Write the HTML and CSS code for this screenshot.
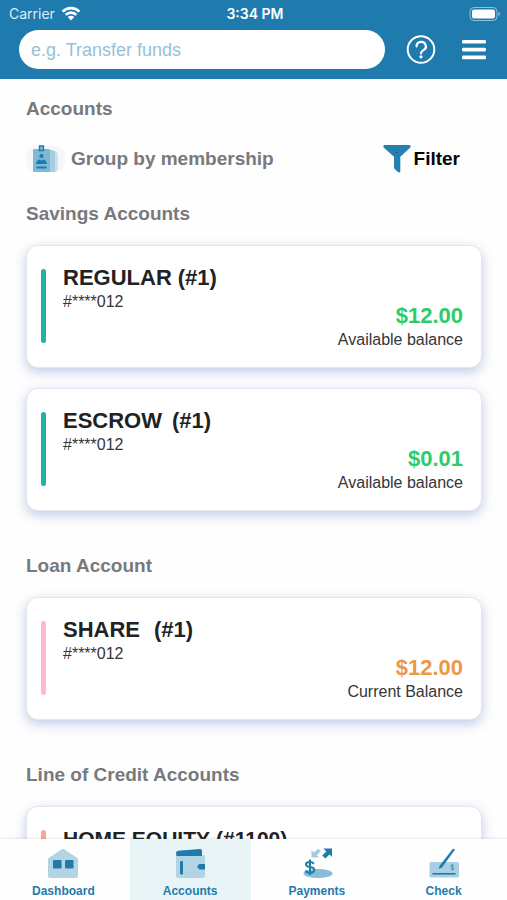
FILE: index.html
```html
<!DOCTYPE html>
<html lang="en">
<head>
<meta charset="utf-8">
<meta name="viewport" content="width=device-width, initial-scale=1">
<title>Accounts</title>
<link rel="stylesheet" href="styles.css">
</head>
<body>
<header class="top">
  <div class="status">
    <div class="carrier">Carrier
      <svg width="20" height="15" viewBox="0 0 20 15" fill="none" stroke="#fff" stroke-width="2.6">
        <path d="M1.6 5.6a12 12 0 0 1 16.800 0M4.700 8.800a7.500 7.500 0 0 1 10.600 0"/>
        <path d="M10 14.400l-3.200-3.300a4.600 4.600 0 0 1 6.400 0z" fill="#fff" stroke="none"/>
      </svg>
    </div>
    <div class="clock">3:34 PM</div>
    <svg class="battery" width="32" height="14" viewBox="0 0 32 14">
      <rect x="1" y="0.5" width="27" height="13" rx="4" fill="none" stroke="#8fc0dc"/>
      <rect x="3" y="2.500" width="23" height="9" rx="2" fill="#fff"/>
      <path d="M29.500 5v4q1.500-.6 1.500-2t-1.500-2z" fill="#8fc0dc"/>
    </svg>
  </div>
  <div class="tools">
    <input class="search" type="text" aria-label="Search" placeholder="e.g. Transfer funds">
    <button class="icon-btn" aria-label="Help">
      <svg width="30" height="30" viewBox="0 0 30 30" fill="none" stroke="#fff" stroke-linecap="round">
        <circle cx="15" cy="14.500" r="13.300" stroke-width="2"/>
        <path d="M10.600 11.300a4.600 4.400 0 1 1 6.800 3.800Q15 16.500 15 18.500" stroke-width="2.200"/>
        <circle cx="15" cy="21.800" r="1.600" fill="#fff" stroke="none"/>
      </svg>
    </button>
    <button class="icon-btn" aria-label="Menu">
      <svg width="24" height="20" viewBox="0 0 24 20" fill="#fff">
        <rect y="0" width="24" height="3.600" rx="1.300"/><rect y="7.800" width="24" height="3.600" rx="1.300"/><rect y="15.600" width="24" height="3.600" rx="1.300"/>
      </svg>
    </button>
  </div>
</header>

<main class="content">
  <h1 class="heading">Accounts</h1>
  <div class="actions">
    <button class="action group">
      <svg width="39" height="28" viewBox="0 0 39 28">
        <rect x="0" y="1" width="39" height="26" rx="9" fill="#f5f7f9"/>
        <path d="M22 6h8l2 3v16l-3 2h-7z" fill="#cfe2ec"/>
        <path d="M20 5h7l2 2v20h-9z" fill="#a6cde0"/>
        <rect x="7" y="4" width="17" height="23" rx="1" fill="#7db8d6"/>
        <path d="M13.500 1h4v4.500h-4z" fill="#7db8d6" stroke="#1f7bac" stroke-width="1.400"/>
        <circle cx="15.500" cy="11" r="2.100" fill="#1f7bac"/>
        <path d="M10 19q.5-4 3.500-4.500l2 1 2-1q3 .5 3.500 4.500z" fill="#1f7bac"/>
        <path d="M10.500 22.500h10" stroke="#1f7bac" stroke-width="2"/>
      </svg>
      Group by membership
    </button>
    <button class="action filter">
      <svg width="28" height="28" viewBox="0 0 28 28" fill="#2380b1">
        <path d="M1.200 0h25.600q1.500 1.300.3 2.700L17.300 11.800V26.500q-.6 1.400-2 .7L11.600 24q-.6-.6-.6-1.500V11.800L.9 2.700Q-.5 1.300 1.200 0z"/>
        <path d="M11.500 7.500h4" stroke="#1a6b97" stroke-width="1"/>
      </svg>
      Filter
    </button>
  </div>

  <section>
    <h2 class="heading">Savings Accounts</h2>
    <article class="card">
      <span class="bar teal"></span>
      <div class="info">
        <h3 class="name">REGULAR <span>(#1)</span></h3>
        <p class="small">#****012</p>
      </div>
      <div class="balance">
        <p class="amount green">$12.00</p>
        <p class="small">Available balance</p>
      </div>
    </article>
    <article class="card">
      <span class="bar teal"></span>
      <div class="info">
        <h3 class="name wide">ESCROW <span>(#1)</span></h3>
        <p class="small">#****012</p>
      </div>
      <div class="balance">
        <p class="amount green">$0.01</p>
        <p class="small">Available balance</p>
      </div>
    </article>
  </section>

  <section>
    <h2 class="heading">Loan Account</h2>
    <article class="card">
      <span class="bar pink"></span>
      <div class="info">
        <h3 class="name wider">SHARE <span>(#1)</span></h3>
        <p class="small">#****012</p>
      </div>
      <div class="balance">
        <p class="amount orange">$12.00</p>
        <p class="small">Current Balance</p>
      </div>
    </article>
  </section>

  <section>
    <h2 class="heading">Line of Credit Accounts</h2>
    <article class="card">
      <span class="bar coral"></span>
      <div class="info">
        <h3 class="name long">HOME EQUITY <span>(#1100)</span></h3>
      </div>
    </article>
  </section>
</main>

<nav class="tabs">
  <a class="tab" href="#dashboard">
    <svg width="32" height="32" viewBox="0 0 32 32">
      <path d="M1 12.500q0-1.200 1-1.800L14.500 2.500q1.500-.9 3 0L30 10.700q1 .6 1 1.800V29q0 2-2 2H3q-2 0-2-2z" fill="#b3d4e5"/>
      <rect x="6" y="13" width="8.500" height="8.500" rx="1.200" fill="#1f7bac"/>
      <rect x="18" y="13" width="8.500" height="8.500" rx="1.200" fill="#1f7bac"/>
    </svg>
    Dashboard
  </a>
  <a class="tab active" href="#accounts">
    <svg width="32" height="32" viewBox="0 0 32 32">
      <path d="M2 8h27q2 0 2 2v19q0 2-2 2H4q-2 0-2-2z" fill="#b3d4e5"/>
      <path d="M2 6q0-2 2-2.200L26 2q2 0 2 2v5H2.500z" fill="#1f7bac"/>
      <rect x="6" y="14" width="3" height="13.500" rx="1" fill="#1f7bac"/>
      <path d="M31 17h-4.500q-3 .3-3 2.700t3 2.700H31z" fill="#1f7bac"/>
    </svg>
    Accounts
  </a>
  <a class="tab" href="#payments">
    <svg width="32" height="32" viewBox="0 0 32 32">
      <ellipse cx="17" cy="26.500" rx="14.500" ry="4.500" fill="#8bbdd6"/>
      <path d="M12.800 16.800Q11.500 15 8.700 15q-3.700 0-3.700 2.500 0 2 4 2.600 4.300.6 4.300 3 0 2.700-4.300 2.700-3.500 0-4.500-2.300M9 12.500v15.500" fill="none" stroke="#1f7bac" stroke-width="2"/>
      <path d="M10.500 3v7.500H18l-2.300-2.300 4-4-2.500-2.400-4.200 3.700z" fill="#a4cadd"/>
      <path d="M31 1.500V10l-2.500-2.500-4.200 4-3.100-3 4.100-4-2.800-3z" fill="#1f7bac"/>
    </svg>
    Payments
  </a>
  <a class="tab" href="#check">
    <svg width="32" height="32" viewBox="0 0 32 32">
      <rect x="1.500" y="15" width="29.500" height="15.500" rx="1.500" fill="#a9cfe2"/>
      <path d="M4.500 26.800h23" stroke="#1f7bac" stroke-width="1.600"/>
      <path d="M25.800 18.500q-3-1-3 .6 0 .9 1.500 1.200 1.700.3 1.600 1.300-.2 1.400-3.200.5M24.300 17v6.500" fill="none" stroke="#4b96bd" stroke-width="1"/>
      <path d="M24.500 2.200q1.500-1.200 2.400.6L14 20.500l-3.300 1.500.9-3.300z" fill="#1f7bac"/>
    </svg>
    Check
  </a>
</nav>
</body>
</html>
```

FILE: styles.css
```css
* { box-sizing: border-box; }

body {
  margin: 0;
  height: 100vh;
  display: flex;
  flex-direction: column;
  background: #fefefe;
  color: #212224;
  font-family: "Liberation Sans", Arial, sans-serif;
}

h1, h2, h3, p { margin: 0; }

button {
  border: 0;
  padding: 0;
  background: none;
  font: inherit;
}

svg { display: block; flex: none; }

.top {
  flex: none;
  background: #1f7bae;
  padding-bottom: 10px;
}

.status {
  display: grid;
  grid-template-columns: 1fr auto 1fr;
  align-items: center;
  height: 30px;
  padding: 0 6px 3px 9px;
  color: #fff;
  font-family: Inter, sans-serif;
  font-size: 14px;
}

.carrier {
  display: flex;
  align-items: center;
  gap: 6px;
  color: #dcedf6;
}

.clock { font-weight: 600; }

.battery { justify-self: end; }

.tools {
  display: flex;
  align-items: center;
  padding: 0 21px 0 19px;
}

.search {
  flex: 1;
  min-width: 0;
  height: 39px;
  margin-right: 21px;
  padding: 2px 12px 0;
  border: 0;
  border-radius: 20px;
  background: #fff;
  font: 18px "Liberation Sans", Arial, sans-serif;
}

.search::placeholder { color: #98c0d8; opacity: 1; }

.icon-btn + .icon-btn { margin-left: 26px; }

.content {
  flex: 1;
  min-height: 0;
  overflow: hidden;
  padding: 18px 25px 0 26px;
}

.heading, .action {
  font-size: 19px;
  line-height: 24px;
  font-weight: 700;
  color: #77797c;
}

.actions {
  display: flex;
  justify-content: space-between;
  height: 24px;
  margin: 26px 0 31px;
  padding-right: 22px;
}

.action { display: flex; align-items: center; }
.group { gap: 6px; }
.filter { gap: 3px; color: #050505; }

section { margin-bottom: 43px; }

.card {
  display: flex;
  margin-top: 20px;
  padding: 19px 18px 16px 14px;
  border: 1px solid #e2e6ee;
  border-radius: 12px;
  background: #fff;
  box-shadow: 0 4px 12px rgba(90, 115, 190, 0.36);
}

.heading + .card { margin-top: 19px; }

.bar {
  flex: none;
  width: 5px;
  min-height: 74px;
  margin: 4px 17px 8px 0;
  border-radius: 3px;
}

.teal { background: #20b2a6; }
.pink { background: #ffb9ca; }
.coral { background: #f9a68e; }

.info { flex: 1; }

.name {
  display: flex;
  gap: 6px;
  font-size: 22px;
  line-height: 26px;
}

.wide { gap: 10px; }
.wider { gap: 14px; }
.long { font-size: 21px; }

.small {
  font-size: 16px;
  line-height: 22px;
  color: #353638;
}

.balance { align-self: flex-end; text-align: right; }

.amount {
  font-size: 22px;
  line-height: 26px;
  font-weight: 700;
}

.green { color: #2ecc68; }
.orange { color: #ea984a; }

.tabs {
  position: relative;
  flex: none;
  display: grid;
  grid-template-columns: repeat(4, 1fr);
  height: 61px;
  background: #fefefe;
  box-shadow: 0 -1px 2px rgba(60, 70, 90, 0.12);
}

.tab {
  display: flex;
  flex-direction: column;
  align-items: center;
  gap: 5px;
  margin: 0 3px;
  padding-top: 8px;
  color: #1f7bac;
  font-size: 12px;
  line-height: 14px;
  font-weight: 700;
  text-decoration: none;
}

.active { background: #e9f4f7; }
```
